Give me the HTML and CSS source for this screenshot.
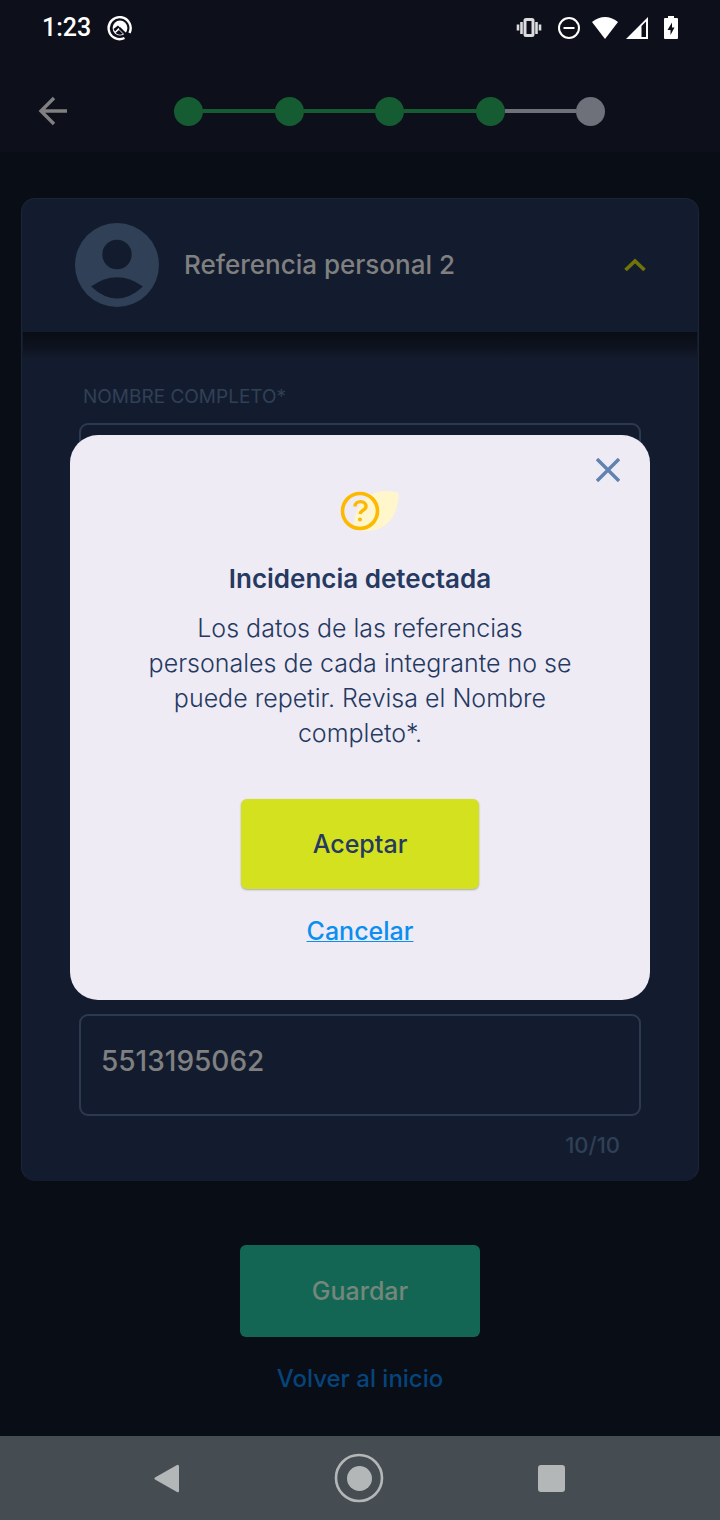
FILE: index.html
```html
<!DOCTYPE html>
<html lang="es">
<head>
<meta charset="utf-8">
<meta name="viewport" content="width=device-width, initial-scale=1">
<title>Referencia personal 2</title>
<link rel="stylesheet" href="styles.css">
</head>
<body>
<div class="status">
  <div class="status-left">
    <span class="clock">1:23</span>
    <svg width="26" height="26" viewBox="0 0 26 26" fill="none" stroke="#fff">
      <path d="M17.500 23A11 11 0 1 1 22.500 18" stroke-width="2.400"/>
      <circle cx="13" cy="13" r="7.400" fill="#fff" stroke="none"/>
      <path d="M12.500 13L22 22.500" stroke="#0d0f1a" stroke-width="2.400"/>
      <path d="M6.500 14L11 10.500L14 13.500L11.500 13L8 16.500Z" fill="#0d0f1a" stroke="none"/>
      <path d="M8.500 18L12 15L16 19Q12 21 8.500 18Z" fill="#0d0f1a" stroke="none"/>
    </svg>
  </div>
  <div class="status-right">
    <svg width="26" height="22" viewBox="0 0 26 22" fill="none" stroke="#dcdcde">
      <rect x="9" y="2.500" width="8" height="16" rx="1" stroke-width="3"/>
      <path d="M5.500 5v12M20.500 5v12M2 7.500v6M24 7.500v6" stroke-width="2.600"/>
    </svg>
    <svg width="24" height="24" viewBox="0 0 24 24" fill="none" stroke="#fff" stroke-width="2">
      <circle cx="12" cy="12" r="10"/><path d="M6.500 12h11"/>
    </svg>
    <svg width="26" height="22" viewBox="0 0 26 22" fill="#fff"><path d="M0 5Q13-5 26 5L13 22Z"/></svg>
    <svg width="22" height="22" viewBox="0 0 22 22"><path d="M0 22L22 0V22Z" fill="#fff"/><path d="M15.500 9L20 4.500V20H15.500Z" fill="#0d0f1a"/></svg>
    <svg width="14" height="24" viewBox="0 0 14 24"><path d="M4 0h6v2h3q1 0 1 1v19q0 1-1 1H1q-1 0-1-1V3q0-1 1-1h3z" fill="#fff"/><path d="M8 6.500L3.500 14H6.500V19L10.500 11.500H8Z" fill="#0d0f1a"/></svg>
  </div>
</div>

<header class="top">
  <button class="back" aria-label="Regresar">
    <svg width="30" height="30" viewBox="0 0 30 30" fill="none" stroke="#808080" stroke-width="3.400"><path d="M29 15H3M16 2L3 15L16 28"/></svg>
  </button>
  <div class="steps">
    <i class="dot"></i><i class="line"></i><i class="dot"></i><i class="line"></i><i class="dot"></i><i class="line"></i><i class="dot"></i><i class="line pending"></i><i class="dot pending"></i>
  </div>
</header>

<main class="main">
  <section class="card">
    <div class="card-head">
      <svg width="84" height="84" viewBox="0 0 84 84"><circle cx="42" cy="42" r="42" fill="#304056"/><circle cx="42" cy="31.500" r="14.700" fill="#131c2e"/><path d="M16 63.500Q42 45 68 63.500Q42 87.500 16 63.500Z" fill="#131c2e"/></svg>
      <h1 class="card-title">Referencia personal 2</h1>
      <button class="toggle" aria-label="Contraer">
        <svg width="22" height="14" viewBox="0 0 22 14" fill="none" stroke="#707409" stroke-width="3.600"><path d="M1.500 12L11 3L20.500 12"/></svg>
      </button>
    </div>
    <form class="card-body">
      <div class="field">
        <label class="label" for="name">NOMBRE COMPLETO*</label>
        <input class="input" id="name" type="text">
      </div>
      <div class="field">
        <input class="input" type="tel" value="5513195062" maxlength="10" aria-label="Teléfono">
        <span class="count">10/10</span>
      </div>
    </form>
  </section>
  <div class="actions">
    <button class="btn save">Guardar</button>
    <a class="home" href="#">Volver al inicio</a>
  </div>
</main>

<nav class="nav">
  <button class="nav-btn" aria-label="Atrás"><svg width="50" height="50" viewBox="0 0 50 50"><path d="M37 13.500V38Q37 40 35 39L13 26.500Q11.500 25.500 13 24.500L35 12Q37 11 37 13.500Z" fill="#b3b7b8"/></svg></button>
  <button class="nav-btn" aria-label="Inicio"><svg width="50" height="50" viewBox="0 0 50 50"><circle cx="25" cy="25" r="23" fill="none" stroke="#b3b7b8" stroke-width="2.600"/><circle cx="25.500" cy="25.500" r="12.500" fill="#b3b7b8"/></svg></button>
  <button class="nav-btn" aria-label="Recientes"><svg width="50" height="50" viewBox="0 0 50 50"><rect x="12" y="12" width="27" height="27" rx="3" fill="#b3b7b8"/></svg></button>
</nav>

<div class="overlay">
  <div class="dialog" role="dialog" aria-labelledby="dialog-title">
    <button class="close" aria-label="Cerrar">
      <svg width="24" height="24" viewBox="0 0 24 24" fill="none" stroke="#5f82b1" stroke-width="3.400"><path d="M1 1L23 23M23 1L1 23"/></svg>
    </button>
    <svg class="mark" width="78" height="42" viewBox="0 0 78 42" fill="none">
      <path d="M33.500 38.500C30 22 45 1 64 1Q73 1 77.500 3Q78 20 69 31Q59 42 42 41Q35 40 33.500 38.500Z" fill="#fff6cb"/>
      <circle cx="39" cy="21" r="17.500" stroke="#fcb900" stroke-width="3.600"/>
      <path d="M34 16.500C34 10 45 10 45 16.500C45 20.500 39.500 20 39 24" stroke="#fcb900" stroke-width="3.400"/>
      <circle cx="39" cy="29.500" r="2" fill="#fcb900"/>
    </svg>
    <h2 class="dialog-title" id="dialog-title">Incidencia detectada</h2>
    <p class="dialog-text">Los datos de las referencias personales de cada integrante no se puede repetir. Revisa el Nombre completo*.</p>
    <button class="btn accept">Aceptar</button>
    <a class="cancel" href="#">Cancelar</a>
  </div>
</div>
</body>
</html>
```
FILE: styles.css
```css
* { box-sizing: border-box; }
body {
  margin: 0;
  min-height: 100vh;
  display: flex;
  flex-direction: column;
  background: #090d15;
  font-family: Inter, "Liberation Sans", sans-serif;
  font-size: 25px;
}
button { margin: 0; padding: 0; border: 0; background: none; font: inherit; cursor: pointer; }
svg { display: block; flex: none; }

.status {
  height: 56px;
  padding: 0 42px;
  display: flex;
  align-items: center;
  justify-content: space-between;
  background: #0d0f1a;
  color: #fff;
}
.status-left { display: flex; align-items: center; gap: 16px; }
.clock { font: 500 25px/30px Roboto, sans-serif; }
.status-right { display: flex; align-items: center; gap: 11px; }
.status-right svg:nth-child(1) { margin-right: 4px; }
.status-right svg:nth-child(4) { margin: 0 5px 0 -3px; }

.top {
  height: 96px;
  padding: 14px 115px 0 38px;
  display: flex;
  align-items: center;
  gap: 106px;
  background: #0d0f1a;
}
.steps { flex: 1; display: flex; align-items: center; }
.dot { width: 29px; height: 29px; border-radius: 50%; background: #165c32; }
.line { flex: 1; height: 4px; background: #165c32; }
.line.pending, .dot.pending { background: #6e707a; }

.main { flex: 1; display: flex; flex-direction: column; padding: 46px 21px 41px; }
.card {
  flex: 1;
  display: flex;
  flex-direction: column;
  border: 1px solid #1b2536;
  border-bottom-color: #131c2e;
  border-radius: 14px;
  background: #131c2e;
}
.card-head {
  height: 133px;
  padding: 0 52px 2px 53px;
  display: flex;
  align-items: center;
  gap: 25px;
}
.card-title { flex: 1; margin: 0; font-size: 26px; line-height: 32px; font-weight: 500; color: #808080; }
.card-body {
  flex: 1;
  margin: 0 1px;
  padding: 52px 56px 21px;
  display: flex;
  flex-direction: column;
  justify-content: space-between;
  border-radius: 0 0 13px 13px;
  background: linear-gradient(#090d15, #0e121e 14px, #131c2e 28px);
}
.field { display: flex; flex-direction: column; }
.label { margin: 0 0 13px 4px; font-size: 19px; line-height: 26px; font-weight: 400; color: #304056; }
.input {
  width: 100%;
  height: 102px;
  padding: 0 20px 8px;
  border: 2px solid #2c3a51;
  border-radius: 9px;
  background: transparent;
  color: #808080;
  font: 500 28px/36px Inter, sans-serif;
}
.count { align-self: flex-end; margin: 15px 21px 0 0; font-size: 22px; line-height: 28px; font-weight: 500; color: #304056; }

.actions { display: flex; flex-direction: column; align-items: center; gap: 26px; padding-top: 64px; }
.btn { width: 240px; height: 92px; border-radius: 6px; font-weight: 500; }
.save { background: #146654; color: #75877b; }
.home { font-size: 24px; line-height: 32px; font-weight: 500; color: #06447c; text-decoration: none; }

.nav {
  height: 84px;
  padding: 0 144px 0 142px;
  display: flex;
  align-items: center;
  justify-content: space-between;
  background: #454d52;
}

.overlay {
  position: fixed;
  inset: 0 0 85px;
  display: flex;
  align-items: center;
  padding: 0 70px;
}
.dialog {
  position: relative;
  width: 100%;
  padding: 55px 70px 53px;
  display: flex;
  flex-direction: column;
  align-items: center;
  border-radius: 28px;
  background: #eeebf5;
  color: #253961;
  text-align: center;
}
.close { position: absolute; top: 23px; right: 30px; }
.dialog-title { margin: 31px 0 16px; font-size: 26px; line-height: 32px; font-weight: 600; }
.dialog-text { margin: 0 0 48px; line-height: 35px; font-weight: 300; }
.accept { width: 238px; height: 90px; background: #d4e11f; color: #253961; box-shadow: 0 1px 2px #aaa8b0; }
.cancel { margin-top: 26px; line-height: 32px; font-weight: 500; color: #0a8ff0; text-decoration: underline; text-decoration-thickness: 1px; }
```
